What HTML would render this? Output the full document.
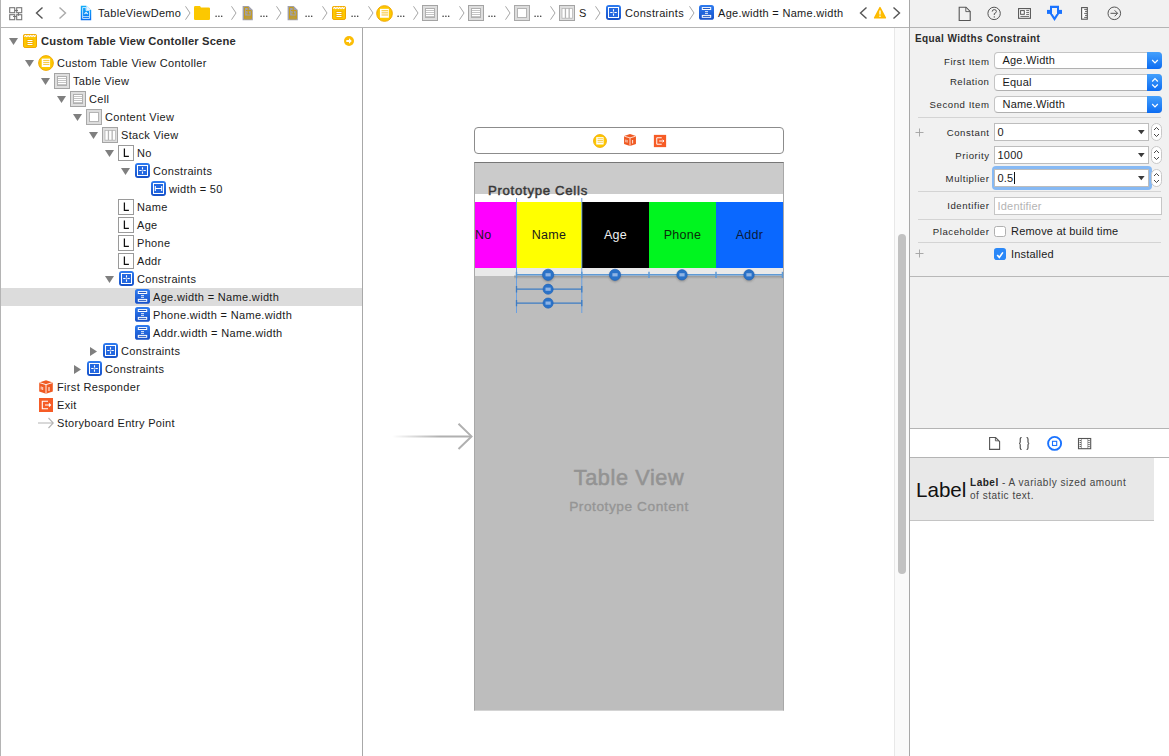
<!DOCTYPE html>
<html><head><meta charset="utf-8">
<style>
*{margin:0;padding:0;box-sizing:border-box}
html,body{width:1169px;height:756px;overflow:hidden;background:#fff;font-family:"Liberation Sans",sans-serif;color:#1c1c1c}
.a{position:absolute}
.t{position:absolute;white-space:pre;font-size:11px;line-height:14px}
.b{font-weight:bold}
.tbt{font-size:11px;line-height:18px;letter-spacing:0.3px;color:#1a1a1a}
.il{font-size:9.6px;line-height:14px;letter-spacing:0.55px;color:#2a2a2a}
.iv{font-size:11px;line-height:14px;letter-spacing:0.2px;color:#1a1a1a}
.pop{width:167.5px;height:17.5px;background:#fff;border:1px solid #c4c4c4;border-bottom-color:#b0b0b0;border-radius:4px}
.popb{width:14.8px;height:17.5px;background:linear-gradient(#44a0fc,#0c6cf2);border-radius:0 4px 4px 0}
.fld{width:155px;height:18px;background:#fff;border:1px solid #bdbdbd}
.stp{width:11px;height:18px;background:#fff;border:1px solid #c8c8c8;border-radius:6px}
.nv{font-size:11px;line-height:18px;letter-spacing:0.33px;color:#1a1a1a}
.nv.b{letter-spacing:0.15px;font-size:11.2px;color:#2c2c2c}
svg{position:absolute;overflow:visible}
</style></head><body>
<!-- frame lines -->
<div class="a" style="left:0;top:0;width:1px;height:756px;background:#b4b4b4"></div>
<div class="a" style="left:909px;top:0;width:260px;height:756px;background:#f1f1f1"></div>
<div class="a" style="left:1px;top:27px;width:1168px;height:1px;background:#b4b4b4"></div>
<div class="a" style="left:362px;top:28px;width:1px;height:728px;background:#a8a8a8"></div>
<div class="a" style="left:909px;top:0;width:1px;height:756px;background:#a8a8a8"></div>
<!-- canvas scroll track -->
<div class="a" style="left:894px;top:28px;width:15px;height:728px;background:#fafafa;border-left:1px solid #e8e8e8"></div>
<div class="a" style="left:898px;top:234px;width:8px;height:340px;background:#c2c2c2;border-radius:4px"></div>

<!-- selected row in navigator -->
<div class="a" style="left:1px;top:288px;width:361px;height:18px;background:#dcdcdc"></div>

<svg width="0" height="0" style="position:absolute">
<defs>
<linearGradient id="gb" x1="0" y1="0" x2="0" y2="1"><stop offset="0" stop-color="#2f7cf0"/><stop offset="1" stop-color="#1550c8"/></linearGradient>
<symbol id="i-scene" viewBox="0 0 16 16">
 <rect x="1.5" y="1.5" width="13" height="13" rx="1.6" fill="#fdc800" stroke="#f0a600"/>
 <rect x="1.5" y="1.5" width="13" height="2.6" fill="#f3b000"/>
 <path d="M2.2 3.5L3.5 2.5L4.8 3.5L6.1 2.5L7.4 3.5L8.7 2.5L10 3.5L11.3 2.5L12.6 3.5L13.9 2.5" stroke="#fff" stroke-width="1.1" fill="none"/>
 <rect x="4.5" y="6" width="7" height="7" fill="#f3b000"/>
 <path d="M5.5 7.5H10.5M5.5 9.5H10.5M5.5 11.5H10.5" stroke="#fff" stroke-width="1"/>
</symbol>
<symbol id="i-vc" viewBox="0 0 16 16">
 <circle cx="8" cy="8" r="7.4" fill="#fdc800" stroke="#f0a600" stroke-width="0.9"/>
 <rect x="3.7" y="3.6" width="8.4" height="8.4" fill="#fff"/>
 <path d="M5.2 5.4H11.4M5.2 7.4H11.4M5.2 9.4H11.4" stroke="#f5b800" stroke-width="0.8"/>
</symbol>
<symbol id="i-table" viewBox="0 0 16 16">
 <rect x="0.5" y="0.5" width="15" height="15" fill="#dedede" stroke="#a4a4a4"/>
 <rect x="3.5" y="3.5" width="9" height="9" fill="#c4c4c4" stroke="#b0b0b0" stroke-width="1"/>
 <path d="M4 4.5H12M4 6.5H12M4 8.5H12M4 10.5H12" stroke="#fff" stroke-width="1"/>
</symbol>
<symbol id="i-view" viewBox="0 0 16 16">
 <rect x="0.5" y="0.5" width="15" height="15" fill="#dcdcdc" stroke="#a9a9a9"/>
 <rect x="3.5" y="3.5" width="9" height="9" fill="#fff" stroke="#b4b4b4"/>
</symbol>
<symbol id="i-stack" viewBox="0 0 16 16">
 <rect x="0.5" y="0.5" width="15" height="15" fill="#dedede" stroke="#a4a4a4"/>
 <rect x="2.6" y="3" width="11" height="10.6" fill="#b4b4b4"/>
 <rect x="3.4" y="3.8" width="2.4" height="9" fill="#fff"/>
 <rect x="7.1" y="3.8" width="2.4" height="9" fill="#fff"/>
 <rect x="10.8" y="3.8" width="2.2" height="9" fill="#fff"/>
</symbol>
<symbol id="i-label" viewBox="0 0 16 16">
 <rect x="0.5" y="0.5" width="15" height="15" fill="#fff" stroke="#9a9a9a"/>
 <path d="M6.4 3.6V11.4H10.9" stroke="#111" stroke-width="1.25" fill="none"/>
</symbol>
<symbol id="i-cons" viewBox="0 0 16 16">
 <rect x="1" y="0" width="15" height="15" rx="3" fill="url(#gb)"/>
 <rect x="3.5" y="2.5" width="10" height="10" fill="#2468e0" stroke="#fff" stroke-width="1"/>
 <path d="M8.5 4.2V6.6M8.5 8.4V10.8M5.2 7.5H7.6M9.4 7.5H11.8" stroke="#fff" stroke-width="1.1"/><circle cx="8.5" cy="7.5" r="0.45" fill="#fff"/>
</symbol>
<symbol id="i-wcons" viewBox="0 0 16 16">
 <rect x="1" y="0" width="15" height="15" rx="3" fill="url(#gb)"/>
 <rect x="3.5" y="2.5" width="10" height="10" fill="#2468e0" stroke="#fff" stroke-width="1"/>
 <path d="M5.3 5V10M11.7 5V10M5.3 7.5H11.7" stroke="#fff" stroke-width="1.1"/>
</symbol>
<symbol id="i-eq" viewBox="0 0 16 16">
 <rect x="1" y="0" width="15" height="14.8" rx="2.6" fill="url(#gb)"/>
 <rect x="4.3" y="2.6" width="8.4" height="1.9" fill="#0d48b8" stroke="#fff" stroke-width="1"/>
 <rect x="4.3" y="10.4" width="8.4" height="1.9" fill="#0d48b8" stroke="#fff" stroke-width="1"/>
 <path d="M7 6.6H10M7 8.4H10" stroke="#fff" stroke-width="0.85"/>
</symbol>
<symbol id="i-fr" viewBox="0 0 16 16">
 <path d="M8 1.2L14.8 3.5V12.5L8 14.8L1.2 12.5V3.5Z" fill="#f05a22"/>
 <path d="M1.4 3.6L8 5.6L14.6 3.6M8 5.6V14.6" stroke="#fff" stroke-width="0.9" fill="none"/>
 <path d="M3.2 7.5V10.5M4.7 8V11" stroke="#fff" stroke-width="0.8"/>
 <path d="M11 8V12" stroke="#fff" stroke-width="1"/>
</symbol>
<symbol id="i-exit" viewBox="0 0 16 16">
 <rect x="1" y="1" width="14" height="14" fill="#f65c26"/>
 <path d="M10 4.3H4.3V11.7H10M7 8H12.5M11 6.5L12.5 8L11 9.5" stroke="#fff" stroke-width="1.1" fill="none"/>
</symbol>
<symbol id="i-entry" viewBox="0 0 16 16">
 <path d="M0 8H15M10.5 3L15.3 8L10.5 13" stroke="#b4b4b4" stroke-width="1.1" fill="none"/>
</symbol>
</defs></svg>

<!-- TB -->
<svg style="left:5px;top:3px" width="20" height="20"><g fill="none" stroke="#777" stroke-width="1.1"><rect x="4.7" y="4.7" width="5" height="5"/><rect x="11.7" y="4.7" width="5" height="5"/><rect x="4.7" y="11.7" width="5" height="5"/><rect x="11.7" y="11.7" width="5" height="5"/><path d="M9.7 7.5H13M13.5 9.7V12.7M8 13.5H11.7"/></g></svg>
<svg style="left:35px;top:7px" width="9" height="12"><path d="M7.5 0.5L1.5 6L7.5 11.5" stroke="#555" stroke-width="1.4" fill="none"/></svg>
<svg style="left:58px;top:7px" width="9" height="12"><path d="M1.5 0.5L7.5 6L1.5 11.5" stroke="#aaa" stroke-width="1.4" fill="none"/></svg>
<svg style="left:76px;top:3px" width="20" height="20"><defs><linearGradient id="gp" x1="0" y1="0" x2="0" y2="1"><stop offset="0" stop-color="#12b0fa"/><stop offset="1" stop-color="#0a6ef2"/></linearGradient></defs><path d="M4.8 2.8H10.3L15.2 7.1V17.2H4.8Z" fill="url(#gp)"/><path d="M10.3 2.8V7.1H15.2" fill="#e8f2ff"/><path d="M6.6 4.5H10V7.5H13.5V15.5H6.6ZM6.8 13.6H13.2" fill="none" stroke="#e6f4ff" stroke-width="0.8"/><path d="M8.5 11L10.1 9.3L11.7 11" fill="none" stroke="#e6f4ff" stroke-width="1.1"/></svg>
<div class="t tbt" style="left:98px;top:4px">TableViewDemo</div>
<svg style="left:185px;top:6px" width="6" height="14"><path d="M0.5 0.3L5 7L0.5 13.7" stroke="#9c9c9c" stroke-width="0.9" fill="none"/></svg>
<svg style="left:231px;top:6px" width="6" height="14"><path d="M0.5 0.3L5 7L0.5 13.7" stroke="#9c9c9c" stroke-width="0.9" fill="none"/></svg>
<svg style="left:276px;top:6px" width="6" height="14"><path d="M0.5 0.3L5 7L0.5 13.7" stroke="#9c9c9c" stroke-width="0.9" fill="none"/></svg>
<svg style="left:322px;top:6px" width="6" height="14"><path d="M0.5 0.3L5 7L0.5 13.7" stroke="#9c9c9c" stroke-width="0.9" fill="none"/></svg>
<svg style="left:368px;top:6px" width="6" height="14"><path d="M0.5 0.3L5 7L0.5 13.7" stroke="#9c9c9c" stroke-width="0.9" fill="none"/></svg>
<svg style="left:413px;top:6px" width="6" height="14"><path d="M0.5 0.3L5 7L0.5 13.7" stroke="#9c9c9c" stroke-width="0.9" fill="none"/></svg>
<svg style="left:459px;top:6px" width="6" height="14"><path d="M0.5 0.3L5 7L0.5 13.7" stroke="#9c9c9c" stroke-width="0.9" fill="none"/></svg>
<svg style="left:505px;top:6px" width="6" height="14"><path d="M0.5 0.3L5 7L0.5 13.7" stroke="#9c9c9c" stroke-width="0.9" fill="none"/></svg>
<svg style="left:550px;top:6px" width="6" height="14"><path d="M0.5 0.3L5 7L0.5 13.7" stroke="#9c9c9c" stroke-width="0.9" fill="none"/></svg>
<svg style="left:595px;top:6px" width="6" height="14"><path d="M0.5 0.3L5 7L0.5 13.7" stroke="#9c9c9c" stroke-width="0.9" fill="none"/></svg>
<svg style="left:689px;top:6px" width="6" height="14"><path d="M0.5 0.3L5 7L0.5 13.7" stroke="#9c9c9c" stroke-width="0.9" fill="none"/></svg>
<svg style="left:194px;top:6px" width="16" height="14"><path d="M0 1.2Q0 0 1.2 0H6L7 1.6H14.8Q16 1.6 16 2.8V12.8Q16 14 14.8 14H1.2Q0 14 0 12.8Z" fill="#fcc800"/><path d="M0 3H16" stroke="#f0b800" stroke-width="0.6"/></svg>
<svg style="left:238px;top:3px" width="20" height="20"><path d="M4.6 2.9H10.7L14.8 7V17.2H4.6Z" fill="#a0a0ac"/><path d="M6.6 4.4H10.2V7.6H13.3V15.8H6.6ZM6.6 13.2H13.3" fill="none" stroke="#c89c10" stroke-width="1"/><path d="M6.4 14.3H13.4" stroke="#c89c10" stroke-width="0.9"/><path d="M8 7.6Q10.5 7.2 10.3 9.3Q9.8 10.8 11.8 11" fill="none" stroke="#c89c10" stroke-width="1.1"/><path d="M8.3 9.6Q9 11 10.6 11.7" fill="none" stroke="#c89c10" stroke-width="0.8"/></svg>
<svg style="left:283px;top:3px" width="20" height="20"><path d="M4.6 2.9H10.7L14.8 7V17.2H4.6Z" fill="#a0a0ac"/><path d="M6.6 4.4H10.2V7.6H13.3V15.8H6.6ZM6.6 13.2H13.3" fill="none" stroke="#c89c10" stroke-width="1"/><path d="M6.4 14.3H13.4" stroke="#c89c10" stroke-width="0.9"/><path d="M8 7.6Q10.5 7.2 10.3 9.3Q9.8 10.8 11.8 11" fill="none" stroke="#c89c10" stroke-width="1.1"/><path d="M8.3 9.6Q9 11 10.6 11.7" fill="none" stroke="#c89c10" stroke-width="0.8"/></svg>
<svg style="left:215px;top:14px" width="9" height="4"><circle cx="1.1" cy="2.2" r="0.78" fill="#333"/><circle cx="3.9" cy="2.2" r="0.78" fill="#333"/><circle cx="6.7" cy="2.2" r="0.78" fill="#333"/></svg>
<svg style="left:260px;top:14px" width="9" height="4"><circle cx="1.1" cy="2.2" r="0.78" fill="#333"/><circle cx="3.9" cy="2.2" r="0.78" fill="#333"/><circle cx="6.7" cy="2.2" r="0.78" fill="#333"/></svg>
<svg style="left:305px;top:14px" width="9" height="4"><circle cx="1.1" cy="2.2" r="0.78" fill="#333"/><circle cx="3.9" cy="2.2" r="0.78" fill="#333"/><circle cx="6.7" cy="2.2" r="0.78" fill="#333"/></svg>
<svg style="left:351px;top:14px" width="9" height="4"><circle cx="1.1" cy="2.2" r="0.78" fill="#333"/><circle cx="3.9" cy="2.2" r="0.78" fill="#333"/><circle cx="6.7" cy="2.2" r="0.78" fill="#333"/></svg>
<svg style="left:397px;top:14px" width="9" height="4"><circle cx="1.1" cy="2.2" r="0.78" fill="#333"/><circle cx="3.9" cy="2.2" r="0.78" fill="#333"/><circle cx="6.7" cy="2.2" r="0.78" fill="#333"/></svg>
<svg style="left:442px;top:14px" width="9" height="4"><circle cx="1.1" cy="2.2" r="0.78" fill="#333"/><circle cx="3.9" cy="2.2" r="0.78" fill="#333"/><circle cx="6.7" cy="2.2" r="0.78" fill="#333"/></svg>
<svg style="left:488px;top:14px" width="9" height="4"><circle cx="1.1" cy="2.2" r="0.78" fill="#333"/><circle cx="3.9" cy="2.2" r="0.78" fill="#333"/><circle cx="6.7" cy="2.2" r="0.78" fill="#333"/></svg>
<svg style="left:534px;top:14px" width="9" height="4"><circle cx="1.1" cy="2.2" r="0.78" fill="#333"/><circle cx="3.9" cy="2.2" r="0.78" fill="#333"/><circle cx="6.7" cy="2.2" r="0.78" fill="#333"/></svg>
<svg style="left:331px;top:5px" width="16" height="16"><use href="#i-scene"/></svg>
<svg style="left:376px;top:5px" width="17" height="17"><use href="#i-vc"/></svg>
<svg style="left:422px;top:5px" width="16" height="16"><use href="#i-table"/></svg>
<svg style="left:468px;top:5px" width="16" height="16"><use href="#i-table"/></svg>
<svg style="left:514px;top:5px" width="16" height="16"><use href="#i-view"/></svg>
<svg style="left:559px;top:5px" width="16" height="16"><use href="#i-stack"/></svg>
<div class="t tbt" style="left:579px;top:4px">S</div>
<svg style="left:605px;top:5px" width="16" height="16"><use href="#i-cons"/></svg>
<div class="t tbt" style="left:625px;top:4px">Constraints</div>
<svg style="left:698px;top:5px" width="16" height="16"><use href="#i-eq"/></svg>
<div class="t tbt" style="left:718px;top:4px">Age.width = Name.width</div>
<svg style="left:859px;top:7px" width="9" height="12"><path d="M7.5 0.5L1.5 6L7.5 11.5" stroke="#555" stroke-width="1.4" fill="none"/></svg>
<svg style="left:873px;top:6px" width="14" height="14"><path d="M7 1.6L12.4 11.9H1.6Z" fill="#ffbf00" stroke="#fdb800" stroke-width="1.4" stroke-linejoin="round"/><path d="M7 4.6V8.4" stroke="#fff" stroke-width="1.3"/><path d="M6.1 10.2H7.9" stroke="#fff" stroke-width="1"/></svg>
<svg style="left:892px;top:7px" width="9" height="12"><path d="M1.5 0.5L7.5 6L1.5 11.5" stroke="#555" stroke-width="1.4" fill="none"/></svg>

<!-- /TB -->
<!-- INSP -->
<svg style="left:958px;top:6px" width="14" height="16"><path d="M1.2 1.2H8L12.2 5.4V14.5H1.2Z" fill="none" stroke="#555" stroke-width="1.1"/><path d="M7.8 1.2V5.6H12.2" fill="none" stroke="#555" stroke-width="0.9"/></svg>
<svg style="left:987px;top:6px" width="15" height="15"><circle cx="7.1" cy="7.4" r="6.2" fill="none" stroke="#555" stroke-width="1"/><path d="M5.2 5.6Q5.2 3.6 7.3 3.6Q9.4 3.6 9.4 5.5Q9.4 6.8 7.3 7.6V9" fill="none" stroke="#555" stroke-width="1"/><circle cx="7.3" cy="10.9" r="0.7" fill="#555"/></svg>
<svg style="left:1012px;top:3px" width="24" height="22"><rect x="6.6" y="5.6" width="11.8" height="9.7" fill="#fff" stroke="#555" stroke-width="1.1"/><rect x="8.6" y="7.6" width="3.7" height="3.7" fill="#fff" stroke="#555" stroke-width="1"/><path d="M14.2 7.4H17M14.2 9.4H17M14.2 11.4H17M8.4 13.4H17" stroke="#555" stroke-width="0.9"/></svg>
<svg style="left:1046px;top:5px" width="17" height="17"><path d="M4 0.8H13V9L8.5 16L4 9Z" fill="#1a73ff"/><rect x="1" y="4.9" width="15" height="4" fill="#1a73ff"/><path d="M6 3H11V8.3L8.5 12L6 8.3Z" fill="#f2f2f2"/></svg>
<svg style="left:1074px;top:3px" width="22" height="22"><rect x="7.6" y="4.6" width="5.7" height="11.6" fill="#fff" stroke="#555" stroke-width="1.1"/><path d="M10.2 6.4H13M11 8.4H13M10.2 10.4H13M11 12.4H13M10.2 14.4H13" stroke="#555" stroke-width="0.9"/></svg>
<svg style="left:1107.3px;top:6px" width="15" height="15"><circle cx="7.3" cy="7.3" r="6.3" fill="none" stroke="#555" stroke-width="1"/><path d="M3.5 7.3H10.5M7.6 4.3L10.6 7.3L7.6 10.3" fill="none" stroke="#555" stroke-width="1"/></svg>
<div class="t b it" style="left:915px;top:31.5px;font-size:10px;letter-spacing:0.4px;color:#2b2b2b">Equal Widths Constraint</div>
<div class="t il" style="left:800px;width:189.5px;text-align:right;top:54.5px">First Item</div>
<div class="t il" style="left:800px;width:189.5px;text-align:right;top:75.4px">Relation</div>
<div class="t il" style="left:800px;width:189.5px;text-align:right;top:98.0px">Second Item</div>
<div class="a pop" style="left:994px;top:51.5px"></div>
<div class="a popb" style="left:1147px;top:51.5px"></div>
<svg style="left:1150px;top:54.5px" width="10" height="12"><path d="M2.2 5L5 7.8L7.8 5" fill="none" stroke="#fff" stroke-width="1.2"/></svg>
<div class="t iv" style="left:1002.5px;top:52.5px">Age.Width</div>
<div class="a pop" style="left:994px;top:73.5px"></div>
<div class="a popb" style="left:1147px;top:73.5px"></div>
<svg style="left:1150px;top:76.5px" width="10" height="12"><path d="M2.2 4.5L5 1.7L7.8 4.5M2.2 7.5L5 10.3L7.8 7.5" fill="none" stroke="#fff" stroke-width="1.2"/></svg>
<div class="t iv" style="left:1002.5px;top:74.5px">Equal</div>
<div class="a pop" style="left:994px;top:95.5px"></div>
<div class="a popb" style="left:1147px;top:95.5px"></div>
<svg style="left:1150px;top:98.5px" width="10" height="12"><path d="M2.2 5L5 7.8L7.8 5" fill="none" stroke="#fff" stroke-width="1.2"/></svg>
<div class="t iv" style="left:1002.5px;top:96.5px">Name.Width</div>
<div class="a" style="left:918px;top:117px;width:243px;height:1px;background:#d4d4d4"></div>
<svg style="left:915px;top:127.5px" width="9" height="9"><path d="M4.5 0.5V8.5M0.5 4.5H8.5" stroke="#a0a0a0" stroke-width="0.9"/></svg>
<div class="a fld" style="left:994px;top:122.5px"></div>
<svg style="left:1138px;top:130.0px" width="7" height="5"><path d="M0 0H6.6L3.3 4.2Z" fill="#3a3a3a"/></svg>
<div class="a stp" style="left:1151px;top:122.5px"></div>
<svg style="left:1152px;top:124.5px" width="9" height="14"><path d="M2 5L4.5 2.5L7 5M2 9L4.5 11.5L7 9" fill="none" stroke="#333" stroke-width="0.9"/></svg>
<div class="t iv" style="left:997.5px;top:124.5px">0</div>
<div class="a fld" style="left:994px;top:145.5px"></div>
<svg style="left:1138px;top:153.0px" width="7" height="5"><path d="M0 0H6.6L3.3 4.2Z" fill="#3a3a3a"/></svg>
<div class="a stp" style="left:1151px;top:145.5px"></div>
<svg style="left:1152px;top:147.5px" width="9" height="14"><path d="M2 5L4.5 2.5L7 5M2 9L4.5 11.5L7 9" fill="none" stroke="#333" stroke-width="0.9"/></svg>
<div class="t iv" style="left:997.5px;top:147.5px">1000</div>
<div class="a" style="left:991.5px;top:165.5px;width:160.5px;height:24px;border-radius:4px;background:#86b9f4"></div>
<div class="a fld" style="left:994px;top:168.5px"></div>
<svg style="left:1138px;top:176.0px" width="7" height="5"><path d="M0 0H6.6L3.3 4.2Z" fill="#3a3a3a"/></svg>
<div class="a stp" style="left:1151px;top:168.5px"></div>
<svg style="left:1152px;top:170.5px" width="9" height="14"><path d="M2 5L4.5 2.5L7 5M2 9L4.5 11.5L7 9" fill="none" stroke="#333" stroke-width="0.9"/></svg>
<div class="t iv" style="left:997.5px;top:170.5px">0.5</div>
<div class="a" style="left:1013.5px;top:171.5px;width:1px;height:12px;background:#111"></div>
<div class="t il" style="left:800px;width:189.5px;text-align:right;top:126.2px">Constant</div>
<div class="t il" style="left:800px;width:189.5px;text-align:right;top:148.89999999999998px">Priority</div>
<div class="t il" style="left:800px;width:189.5px;text-align:right;top:171.7px">Multiplier</div>
<div class="a" style="left:918px;top:191px;width:243px;height:1px;background:#d4d4d4"></div>
<div class="t il" style="left:800px;width:189.5px;text-align:right;top:199.2px">Identifier</div>
<div class="a" style="left:994px;top:196.5px;width:168px;height:18.5px;background:#fff;border:1px solid #c6c6c6"></div>
<div class="t iv" style="left:997.5px;top:198.5px;color:#b4b4b4">Identifier</div>
<div class="a" style="left:918px;top:219px;width:243px;height:1px;background:#d4d4d4"></div>
<div class="t il" style="left:800px;width:189.5px;text-align:right;top:224.79999999999998px">Placeholder</div>
<div class="a" style="left:994px;top:225.5px;width:11.5px;height:11.5px;background:#fff;border:1px solid #b0b0b0;border-radius:2.5px"></div>
<div class="t iv" style="left:1011px;top:224px">Remove at build time</div>
<div class="a" style="left:918px;top:242px;width:243px;height:1px;background:#d4d4d4"></div>
<svg style="left:915px;top:249px" width="9" height="9"><path d="M4.5 0.5V8.5M0.5 4.5H8.5" stroke="#a0a0a0" stroke-width="0.9"/></svg>
<div class="a" style="left:994px;top:248px;width:11.8px;height:11.8px;background:#2a88f8;border-radius:2.8px"></div>
<svg style="left:995px;top:249.5px" width="10" height="10"><path d="M2.2 5L4.3 7.4L7.9 2.4" fill="none" stroke="#fff" stroke-width="1.6"/></svg>
<div class="t iv" style="left:1011px;top:247px">Installed</div>
<div class="a" style="left:910px;top:276px;width:259px;height:1px;background:#b8b8b8"></div>
<div class="a" style="left:910px;top:428px;width:259px;height:1px;background:#b4b4b4"></div>
<div class="a" style="left:910px;top:429px;width:259px;height:28px;background:#fff"></div>
<div class="a" style="left:910px;top:457px;width:259px;height:1px;background:#b4b4b4"></div>
<svg style="left:988px;top:436px" width="14" height="15"><path d="M1.6 1.5H7.6L11.6 5.5V13.4H1.6Z" fill="none" stroke="#555" stroke-width="1.1"/><path d="M7.4 1.6V4.8H10.8" fill="none" stroke="#555" stroke-width="0.9"/></svg>
<svg style="left:1018px;top:436px" width="13" height="15"><path d="M3.6 1.5Q2.2 1.5 2.2 3V6Q2.2 7.4 1 7.4Q2.2 7.4 2.2 8.8V12Q2.2 13.4 3.6 13.4M8.6 1.5Q10 1.5 10 3V6Q10 7.4 11.2 7.4Q10 7.4 10 8.8V12Q10 13.4 8.6 13.4" fill="none" stroke="#3a3a3a" stroke-width="1.05"/></svg>
<svg style="left:1046px;top:435px" width="17" height="17"><circle cx="8.6" cy="8.4" r="6.5" fill="none" stroke="#1a73ff" stroke-width="1.9"/><rect x="6.5" y="6.3" width="4.2" height="4.2" fill="none" stroke="#1a73ff" stroke-width="1.1"/></svg>
<svg style="left:1077px;top:437px" width="15" height="13"><rect x="1.5" y="1.5" width="12.2" height="10.2" fill="none" stroke="#555" stroke-width="1.1"/><path d="M4.5 1.5V11.7M10.7 1.5V11.7" stroke="#555" stroke-width="0.5"/><path d="M2.5 3.6H4M2.5 5.6H4M2.5 7.6H4M2.5 9.6H4M11.2 3.6H12.7M11.2 5.6H12.7M11.2 7.6H12.7M11.2 9.6H12.7" stroke="#555" stroke-width="1"/></svg>
<div class="a" style="left:910px;top:458px;width:259px;height:298px;background:#fff"></div>
<div class="a" style="left:910px;top:458px;width:244px;height:63px;background:#e8e8e8;border-bottom:1px solid #c4c4c4"></div>
<div class="t" style="left:916px;top:475.5px;font-size:20.6px;line-height:28px;color:#111">Label</div>
<div class="t" style="left:970px;top:475.5px;font-size:10px;line-height:13px;color:#444;letter-spacing:0.52px"><b style="color:#222">Label</b> - A variably sized amount
of static text.</div>

<!-- /INSP -->
<!-- CANVAS -->
<div class="a" style="left:474px;top:127px;width:310px;height:27px;background:#fff;border:1px solid #8c8c8c;border-radius:4px"></div>
<svg style="left:592.5px;top:133.5px" width="14" height="14" viewBox="0 0 16 16"><use href="#i-vc"/></svg>
<svg style="left:622.5px;top:133px" width="14" height="14" viewBox="0 0 16 16"><use href="#i-fr"/></svg>
<svg style="left:653px;top:133.5px" width="14" height="14" viewBox="0 0 16 16"><use href="#i-exit"/></svg>
<div class="a" style="left:474px;top:162px;width:310px;height:549px;background:#bdbdbd;border:1px solid #a8a8a8;border-top-color:#777;border-bottom-color:#d4d4d4"></div>
<div class="a" style="left:475px;top:163px;width:308px;height:31px;background:#cbcbcb"></div>
<div class="a" style="left:475px;top:194px;width:308px;height:8px;background:#fff"></div>
<div class="a" style="left:475px;top:267.5px;width:308px;height:8px;background:#e9e9e9"></div>
<div class="t b" style="left:488px;top:183px;font-size:13.2px;line-height:16px;letter-spacing:0.7px;color:#383838;font-weight:normal;-webkit-text-stroke:0.45px #383838">Prototype Cells</div>
<div class="a" style="left:475px;top:202px;width:41px;height:65.5px;background:#ff00ff"></div>
<div class="t" style="left:475px;top:227px;font-size:12.5px;line-height:16px;letter-spacing:0.3px;color:#1a1a1a">No</div>
<div class="a" style="left:516px;top:202px;width:66px;height:65.5px;background:#ffff00"></div>
<div class="t" style="left:516px;width:66px;text-align:center;top:227px;font-size:12.5px;line-height:16px;letter-spacing:0.3px;color:#1a1a1a">Name</div>
<div class="a" style="left:582px;top:202px;width:67px;height:65.5px;background:#000000"></div>
<div class="t" style="left:582px;width:67px;text-align:center;top:227px;font-size:12.5px;line-height:16px;letter-spacing:0.3px;color:#f0f0f0">Age</div>
<div class="a" style="left:649px;top:202px;width:67px;height:65.5px;background:#00f51f"></div>
<div class="t" style="left:649px;width:67px;text-align:center;top:227px;font-size:12.5px;line-height:16px;letter-spacing:0.3px;color:#0a2a0a">Phone</div>
<div class="a" style="left:716px;top:202px;width:67px;height:65.5px;background:#0a68ff"></div>
<div class="t" style="left:716px;width:67px;text-align:center;top:227px;font-size:12.5px;line-height:16px;letter-spacing:0.3px;color:#0a1a3a">Addr</div>
<div class="t b" style="left:474px;width:310px;text-align:center;top:464.5px;font-size:21.7px;line-height:26px;color:#939393;font-weight:normal;letter-spacing:0.6px;-webkit-text-stroke:0.55px #939393">Table View</div>
<div class="t b" style="left:474px;width:310px;text-align:center;top:498.5px;font-size:13.7px;line-height:16px;color:#959595;font-weight:normal;letter-spacing:0.55px;-webkit-text-stroke:0.35px #959595">Prototype Content</div>
<svg style="left:0;top:0" width="1169" height="756"><defs><filter id="sh" x="-50%" y="-50%" width="200%" height="200%"><feGaussianBlur stdDeviation="0.9"/></filter></defs><path d="M516.5 198V313M581.8 198V313" stroke="#6aa0e2" stroke-width="1"/><defs><linearGradient id="gsh" x1="0" y1="0" x2="0" y2="1"><stop offset="0" stop-color="#606060" stop-opacity="0.45"/><stop offset="1" stop-color="#606060" stop-opacity="0"/></linearGradient></defs><rect x="514" y="275.5" width="269" height="3.5" fill="url(#gsh)"/><path d="M516 274.8H783" stroke="#5e9ad6" stroke-width="1.6"/><path d="M516.5 271.8V278" stroke="#5e9ad6" stroke-width="1.5"/><path d="M581.8 271.8V278" stroke="#5e9ad6" stroke-width="1.5"/><path d="M649 271.8V278" stroke="#5e9ad6" stroke-width="1.5"/><path d="M716 271.8V278" stroke="#5e9ad6" stroke-width="1.5"/><path d="M782.5 271.8V278" stroke="#5e9ad6" stroke-width="1.5"/><path d="M516.5 289.2H581.8M516.5 303.1H581.8" stroke="#3d7cc4" stroke-width="1.3"/><path d="M516.5 286V292.4M581.8 286V292.4M516.5 300V306.2M581.8 300V306.2" stroke="#3d7cc4" stroke-width="1.3"/><circle cx="548.1" cy="276.1" r="5.6" fill="#444" fill-opacity="0.45" filter="url(#sh)"/><circle cx="615" cy="276.1" r="5.6" fill="#444" fill-opacity="0.45" filter="url(#sh)"/><circle cx="682" cy="276.1" r="5.2" fill="#444" fill-opacity="0.45" filter="url(#sh)"/><circle cx="749" cy="276.1" r="5.2" fill="#444" fill-opacity="0.45" filter="url(#sh)"/><circle cx="548.1" cy="274.8" r="5.6" fill="#2a72c8" stroke="#1f62b6" stroke-width="0.6"/><rect x="545.5" y="273.2" width="5.2" height="3.2" fill="#8fb4e4"/><circle cx="615" cy="274.8" r="5.6" fill="#2a72c8" stroke="#1f62b6" stroke-width="0.6"/><rect x="612.4" y="273.2" width="5.2" height="3.2" fill="#8fb4e4"/><circle cx="682" cy="274.8" r="5.2" fill="#2a72c8" stroke="#1f62b6" stroke-width="0.6"/><rect x="679.4" y="273.2" width="5.2" height="3.2" fill="#8fb4e4"/><circle cx="749" cy="274.8" r="5.2" fill="#2a72c8" stroke="#1f62b6" stroke-width="0.6"/><rect x="746.4" y="273.2" width="5.2" height="3.2" fill="#8fb4e4"/><circle cx="548.1" cy="289.2" r="5.1" fill="#2a72c8" stroke="#1f62b6" stroke-width="0.6"/><rect x="545.5" y="287.59999999999997" width="5.2" height="3.2" fill="#8fb4e4"/><circle cx="548.1" cy="303.1" r="5.1" fill="#2a72c8" stroke="#1f62b6" stroke-width="0.6"/><rect x="545.5" y="301.5" width="5.2" height="3.2" fill="#8fb4e4"/></svg>
<svg style="left:0;top:0" width="1169" height="756"><defs><linearGradient id="ga" x1="392" y1="0" x2="440" y2="0" gradientUnits="userSpaceOnUse"><stop offset="0" stop-color="#b0b0b0" stop-opacity="0"/><stop offset="1" stop-color="#b0b0b0"/></linearGradient></defs><path d="M392 436.4H471" stroke="url(#ga)" stroke-width="2"/><path d="M458.5 423.8L471.5 436.4L458.5 449" stroke="#b0b0b0" stroke-width="2" fill="none"/></svg>

<!-- /CANVAS -->
<!-- NAV -->
<svg class="tri" style="left:9px;top:38px" width="9" height="7"><path d="M0 0H9L4.5 7Z" fill="#7f7f7f"/></svg>
<svg style="left:22px;top:33px" width="16" height="16"><use href="#i-scene"/></svg>
<div class="t nv b" style="left:41px;top:32px">Custom Table View Contoller Scene</div>
<svg class="tri" style="left:25px;top:60px" width="9" height="7"><path d="M0 0H9L4.5 7Z" fill="#7f7f7f"/></svg>
<svg style="left:38px;top:55px" width="16" height="16"><use href="#i-vc"/></svg>
<div class="t nv" style="left:57px;top:54px">Custom Table View Contoller</div>
<svg class="tri" style="left:41px;top:78px" width="9" height="7"><path d="M0 0H9L4.5 7Z" fill="#7f7f7f"/></svg>
<svg style="left:54px;top:73px" width="16" height="16"><use href="#i-table"/></svg>
<div class="t nv" style="left:73px;top:72px">Table View</div>
<svg class="tri" style="left:57px;top:96px" width="9" height="7"><path d="M0 0H9L4.5 7Z" fill="#7f7f7f"/></svg>
<svg style="left:70px;top:91px" width="16" height="16"><use href="#i-table"/></svg>
<div class="t nv" style="left:89px;top:90px">Cell</div>
<svg class="tri" style="left:73px;top:114px" width="9" height="7"><path d="M0 0H9L4.5 7Z" fill="#7f7f7f"/></svg>
<svg style="left:86px;top:109px" width="16" height="16"><use href="#i-view"/></svg>
<div class="t nv" style="left:105px;top:108px">Content View</div>
<svg class="tri" style="left:89px;top:132px" width="9" height="7"><path d="M0 0H9L4.5 7Z" fill="#7f7f7f"/></svg>
<svg style="left:102px;top:127px" width="16" height="16"><use href="#i-stack"/></svg>
<div class="t nv" style="left:121px;top:126px">Stack View</div>
<svg class="tri" style="left:105px;top:150px" width="9" height="7"><path d="M0 0H9L4.5 7Z" fill="#7f7f7f"/></svg>
<svg style="left:118px;top:145px" width="16" height="16"><use href="#i-label"/></svg>
<div class="t nv" style="left:137px;top:144px">No</div>
<svg class="tri" style="left:121px;top:168px" width="9" height="7"><path d="M0 0H9L4.5 7Z" fill="#7f7f7f"/></svg>
<svg style="left:134px;top:163px" width="16" height="16"><use href="#i-cons"/></svg>
<div class="t nv" style="left:153px;top:162px">Constraints</div>
<svg style="left:150px;top:181px" width="16" height="16"><use href="#i-wcons"/></svg>
<div class="t nv" style="left:169px;top:180px">width = 50</div>
<svg style="left:118px;top:199px" width="16" height="16"><use href="#i-label"/></svg>
<div class="t nv" style="left:137px;top:198px">Name</div>
<svg style="left:118px;top:217px" width="16" height="16"><use href="#i-label"/></svg>
<div class="t nv" style="left:137px;top:216px">Age</div>
<svg style="left:118px;top:235px" width="16" height="16"><use href="#i-label"/></svg>
<div class="t nv" style="left:137px;top:234px">Phone</div>
<svg style="left:118px;top:253px" width="16" height="16"><use href="#i-label"/></svg>
<div class="t nv" style="left:137px;top:252px">Addr</div>
<svg class="tri" style="left:105px;top:276px" width="9" height="7"><path d="M0 0H9L4.5 7Z" fill="#7f7f7f"/></svg>
<svg style="left:118px;top:271px" width="16" height="16"><use href="#i-cons"/></svg>
<div class="t nv" style="left:137px;top:270px">Constraints</div>
<svg style="left:134px;top:289px" width="16" height="16"><use href="#i-eq"/></svg>
<div class="t nv" style="left:153px;top:288px">Age.width = Name.width</div>
<svg style="left:134px;top:307px" width="16" height="16"><use href="#i-eq"/></svg>
<div class="t nv" style="left:153px;top:306px">Phone.width = Name.width</div>
<svg style="left:134px;top:325px" width="16" height="16"><use href="#i-eq"/></svg>
<div class="t nv" style="left:153px;top:324px">Addr.width = Name.width</div>
<svg class="tri" style="left:90px;top:347px" width="7" height="9"><path d="M0 0V9L7 4.5Z" fill="#7f7f7f"/></svg>
<svg style="left:102px;top:343px" width="16" height="16"><use href="#i-cons"/></svg>
<div class="t nv" style="left:121px;top:342px">Constraints</div>
<svg class="tri" style="left:74px;top:365px" width="7" height="9"><path d="M0 0V9L7 4.5Z" fill="#7f7f7f"/></svg>
<svg style="left:86px;top:361px" width="16" height="16"><use href="#i-cons"/></svg>
<div class="t nv" style="left:105px;top:360px">Constraints</div>
<svg style="left:38px;top:379px" width="16" height="16"><use href="#i-fr"/></svg>
<div class="t nv" style="left:57px;top:378px">First Responder</div>
<svg style="left:38px;top:397px" width="16" height="16"><use href="#i-exit"/></svg>
<div class="t nv" style="left:57px;top:396px">Exit</div>
<svg style="left:38px;top:415px" width="16" height="16"><use href="#i-entry"/></svg>
<div class="t nv" style="left:57px;top:414px">Storyboard Entry Point</div>
<svg id="scene-arrow" style="left:344px;top:36px" width="10" height="10"><circle cx="5" cy="5" r="5" fill="#fbbd06"/><path d="M2.3 4.1H5V2.3L7.8 5L5 7.7V5.9H2.3Z" fill="#fff"/></svg>

<!-- /NAV -->
</body></html>
